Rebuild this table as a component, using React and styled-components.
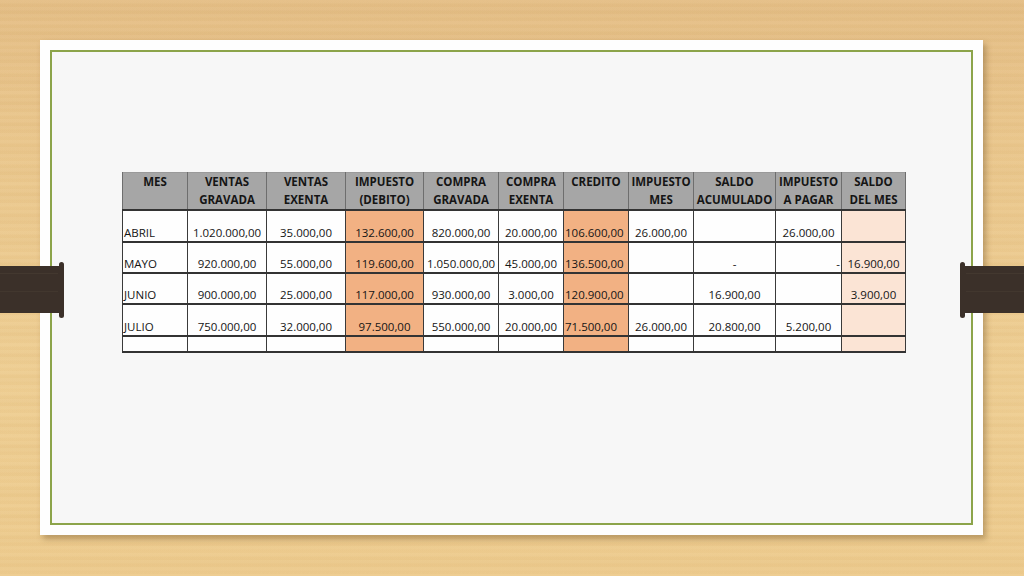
import React from "react"
import styled, { createGlobalStyle } from "styled-components"

const GlobalStyle = createGlobalStyle`
  html, body {
    margin: 0;
    padding: 0;
    background: #ebc78d;
  }
  * {
    box-sizing: border-box;
  }
`

const columns = [
  { label: ["MES", ""], width: 65 },
  { label: ["VENTAS", "GRAVADA"], width: 79 },
  { label: ["VENTAS", "EXENTA"], width: 79 },
  { label: ["IMPUESTO", "(DEBITO)"], width: 78, tint: "orange" },
  { label: ["COMPRA", "GRAVADA"], width: 75 },
  { label: ["COMPRA", "EXENTA"], width: 65 },
  { label: ["CREDITO", ""], width: 65, tint: "orange", align: "left" },
  { label: ["IMPUESTO", "MES"], width: 65 },
  { label: ["SALDO", "ACUMULADO"], width: 82 },
  { label: ["IMPUESTO", "A PAGAR"], width: 66 },
  { label: ["SALDO", "DEL MES"], width: 64, tint: "peach" },
]

const rows = [
  { height: 32, cells: ["ABRIL", "1.020.000,00", "35.000,00", "132.600,00", "820.000,00", "20.000,00", "106.600,00", "26.000,00", "", "26.000,00", ""] },
  { height: 31, cells: ["MAYO", "920.000,00", "55.000,00", "119.600,00", "1.050.000,00", "45.000,00", "136.500,00", "", "-", "-", "16.900,00"] },
  { height: 31, cells: ["JUNIO", "900.000,00", "25.000,00", "117.000,00", "930.000,00", "3.000,00", "120.900,00", "", "16.900,00", "", "3.900,00"] },
  { height: 32, cells: ["JULIO", "750.000,00", "32.000,00", "97.500,00", "550.000,00", "20.000,00", "71.500,00", "26.000,00", "20.800,00", "5.200,00", ""] },
  { height: 16, cells: ["", "", "", "", "", "", "", "", "", "", ""] },
]

const tints = {
  orange: "#f2b183",
  peach: "#fbe4d5",
}

const App = () => {
  return (
    <>
      <GlobalStyle />
      <Stage>
        <Paper>
          <Frame>
            <Sheet>
              <colgroup>
                {columns.map((c, i) => (
                  <col key={i} style={{ width: c.width }} />
                ))}
              </colgroup>
              <thead>
                <tr>
                  {columns.map((c, i) => (
                    <HeadCell key={i}>
                      {c.label[0]}
                      <br />
                      {c.label[1]}
                    </HeadCell>
                  ))}
                </tr>
              </thead>
              <tbody>
                {rows.map((r, ri) => (
                  <BodyRow key={ri} $h={r.height}>
                    {r.cells.map((v, ci) => {
                      const col = columns[ci]
                      let align = ci === 0 ? "left" : col.align || "center"
                      if (ci === 9 && v === "-") align = "right"
                      return (
                        <Cell key={ci} $tint={col.tint} $align={align}>
                          {v}
                        </Cell>
                      )
                    })}
                  </BodyRow>
                ))}
              </tbody>
            </Sheet>
          </Frame>
        </Paper>
        <Clip $side="left">
          <ClipShape flip={false} />
        </Clip>
        <Clip $side="right">
          <ClipShape flip={true} />
        </Clip>
      </Stage>
    </>
  )
}

const ClipShape = ({ flip }) => (
  <svg width="64" height="58" viewBox="0 0 64 58" style={flip ? { transform: "scaleX(-1)" } : undefined}>
    <rect x="0" y="5" width="61" height="47" fill="#3b3029" />
    <rect x="59" y="1" width="5" height="56" rx="2.5" fill="#3b3029" />
    <rect x="0" y="12" width="58" height="1" fill="#4a3d33" opacity="0.6" />
    <rect x="0" y="30" width="58" height="1" fill="#4a3d33" opacity="0.5" />
  </svg>
)

const Stage = styled.div`
  position: relative;
  width: 1024px;
  height: 576px;
  overflow: hidden;
  padding: 40px 41px 41px 40px;
  background:
    repeating-linear-gradient(
      180deg,
      rgba(255, 255, 255, 0.025) 0px,
      rgba(255, 255, 255, 0.025) 3px,
      rgba(150, 100, 30, 0.025) 4px,
      rgba(150, 100, 30, 0.025) 7px
    ),
    repeating-linear-gradient(
      180deg,
      rgba(160, 110, 40, 0) 0px,
      rgba(160, 110, 40, 0.04) 11px,
      rgba(160, 110, 40, 0) 23px
    ),
    linear-gradient(180deg, #e5bf87 0%, #ebc88e 25%, #efcf94 65%, #eecc8f 100%);
  font-family: "Open Sans", "Liberation Sans", sans-serif;
`

const Paper = styled.div`
  height: 100%;
  background: #fefefe;
  padding: 10px;
  box-shadow: 3px 4px 6px rgba(90, 60, 20, 0.35);
`

const Frame = styled.div`
  height: 100%;
  border: 2px solid #8ca44a;
  background: #f7f7f7;
  padding: 120px 0 0 70px;
`

const Sheet = styled.table`
  table-layout: fixed;
  border-collapse: collapse;
  width: 783px;
  color: #151515;
  font-size: 11.5px;
  border: 1px solid #3a3a3a;
  border-top: 1px solid #9a9a9a;
`

const HeadCell = styled.th`
  height: 34px;
  padding: 0;
  vertical-align: top;
  line-height: 18px;
  font-weight: 700;
  text-align: center;
  white-space: nowrap;
  background: #a6a6a6;
  border-left: 1px solid #6e6e6e;
  border-right: 1px solid #6e6e6e;
  border-bottom: 2px solid #333;
`

const BodyRow = styled.tr`
  height: ${p => p.$h}px;
`

const Cell = styled.td`
  padding: 0 1px 1px;
  vertical-align: bottom;
  line-height: 15px;
  white-space: nowrap;
  overflow: hidden;
  text-align: ${p => p.$align};
  background: ${p => (p.$tint ? tints[p.$tint] : "#fefefe")};
  border: 1px solid #3a3a3a;
  border-bottom: 2px solid #333;
`

const Clip = styled.div`
  position: absolute;
  top: 261px;
  ${p => (p.$side === "left" ? "left: 0;" : "right: 0;")}
  width: 64px;
  height: 58px;
  line-height: 0;
`

export default App
